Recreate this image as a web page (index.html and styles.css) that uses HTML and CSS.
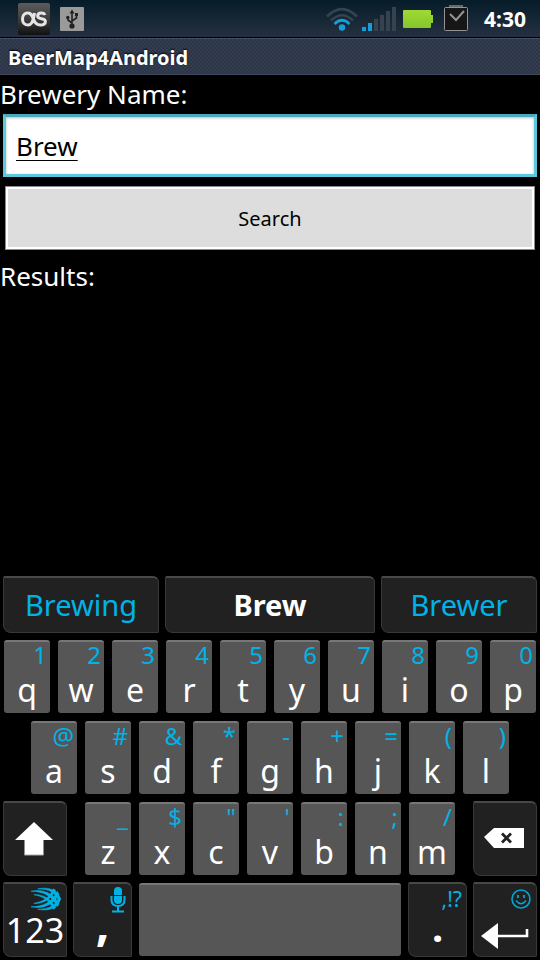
FILE: index.html
```html
<!DOCTYPE html>
<html lang="en">
<head>
<meta charset="utf-8">
<meta name="viewport" content="width=device-width, initial-scale=1">
<title>BeerMap4Android</title>
<link rel="stylesheet" href="styles.css">
</head>
<body>
<header class="status">
  <svg class="app-icon" width="34" height="36" viewBox="0 0 34 36" aria-hidden="true">
    <defs>
      <linearGradient id="tile" x1="0" y1="0" x2="0" y2="1"><stop offset="0" stop-color="#5c5c5c"/><stop offset=".45" stop-color="#414141"/><stop offset=".75" stop-color="#282828"/><stop offset="1" stop-color="#111"/></linearGradient>
    </defs>
    <rect x="1" y="2" width="32" height="32" rx="2" fill="url(#tile)"/>
    <path d="M17.500 12C16 22 14 24 10.800 24C7.300 24 5.500 21.700 5.500 18C5.500 14.300 7.400 12 10.800 12C14.300 12 15.200 14.800 16.500 18.300C18 22.300 19.700 24 23.300 24C26.300 24 28.400 23 28.400 20.500C28.400 16.300 20.700 19 20.700 15C20.700 13 22.200 12 24.400 12C26.200 12 27.400 12.600 28 14" fill="none" stroke="#e6e6e6" stroke-width="3"/>
  </svg>
  <svg class="usb-icon" width="24" height="24" viewBox="0 0 24 24" aria-hidden="true">
    <rect width="24" height="24" rx="1" fill="#9a9a9a"/>
    <path d="M12 5V19M12 16L8 13V10M12 14L16.500 11V8" fill="none" stroke="#222" stroke-width="1.600"/>
    <path d="M12 2.500L14.500 6.500H9.500Z" fill="#222"/>
    <rect x="15" y="6" width="3" height="3" fill="#222"/><circle cx="7.800" cy="10.500" r="1.700" fill="#222"/><circle cx="12" cy="19" r="2.600" fill="#222"/>
  </svg>
  <span class="spacer"></span>
  <svg class="wifi" width="34" height="28" viewBox="0 0 34 28" aria-hidden="true">
    <g fill="none" stroke-width="2.600"><path d="M1 11.500Q16-3.500 31 11.500M5 15.500Q16 5 27 15.500" stroke="#34444f"/><path d="M8.500 19Q16 11.500 23.500 19" stroke="#159fd8"/></g>
    <circle cx="16" cy="22.500" r="3.200" fill="#159fd8"/>
  </svg>
  <svg class="signal" width="36" height="26" viewBox="0 0 36 26" aria-hidden="true">
    <path d="M0 21h4v4h-4zM6 17h4v8h-4z" fill="#159fd8"/>
    <path d="M12 13h4v12h-4zM18 9h4v16h-4zM24 5h4v20h-4zM30 1h4v24h-4z" fill="#36434f"/>
  </svg>
  <svg class="battery" width="30" height="18" viewBox="0 0 30 18" aria-hidden="true">
    <defs><linearGradient id="charge" x1="0" y1="0" x2="0" y2="1"><stop offset="0" stop-color="#a0d934"/><stop offset="1" stop-color="#84c62d"/></linearGradient></defs>
    <path d="M1 0H27Q28 0 28 1V5H30V13H28V17Q28 18 27 18H1Q0 18 0 17V1Q0 0 1 0Z" fill="url(#charge)"/>
  </svg>
  <svg class="task" width="24" height="28" viewBox="0 0 24 28" aria-hidden="true">
    <path d="M5 0H19V2H5Z" fill="#686868"/><rect x=".5" y="2.500" width="23" height="23" rx="1" fill="#161616" stroke="#939393"/>
    <path d="M6 9L12 15L20 6" fill="none" stroke="#949494" stroke-width="2"/>
  </svg>
  <time class="clock">4:30</time>
</header>
<h1 class="title">BeerMap4Android</h1>
<main class="content">
  <form class="search-form">
    <label class="label" for="brewery">Brewery Name:</label>
    <input class="field" id="brewery" type="text" value="Brew" autocomplete="off" spellcheck="false">
    <button class="search" type="button">Search</button>
  </form>
  <h2 class="label">Results:</h2>
</main>
<section class="keyboard" aria-label="Keyboard">
  <div class="suggestions">
    <button class="dark suggestion" type="button">Brewing</button>
    <button class="dark suggestion chosen" type="button">Brew</button>
    <button class="dark suggestion" type="button">Brewer</button>
  </div>
  <div class="row">
    <button class="key" type="button"><sup>1</sup><span>q</span></button>
    <button class="key" type="button"><sup>2</sup><span>w</span></button>
    <button class="key" type="button"><sup>3</sup><span>e</span></button>
    <button class="key" type="button"><sup>4</sup><span>r</span></button>
    <button class="key" type="button"><sup>5</sup><span>t</span></button>
    <button class="key" type="button"><sup>6</sup><span>y</span></button>
    <button class="key" type="button"><sup>7</sup><span>u</span></button>
    <button class="key" type="button"><sup>8</sup><span>i</span></button>
    <button class="key" type="button"><sup>9</sup><span>o</span></button>
    <button class="key" type="button"><sup>0</sup><span>p</span></button>
  </div>
  <div class="row middle">
    <button class="key" type="button"><sup>@</sup><span>a</span></button>
    <button class="key" type="button"><sup>#</sup><span>s</span></button>
    <button class="key" type="button"><sup>&amp;</sup><span>d</span></button>
    <button class="key" type="button"><sup>*</sup><span>f</span></button>
    <button class="key" type="button"><sup>-</sup><span>g</span></button>
    <button class="key" type="button"><sup>+</sup><span>h</span></button>
    <button class="key" type="button"><sup>=</sup><span>j</span></button>
    <button class="key" type="button"><sup>(</sup><span>k</span></button>
    <button class="key" type="button"><sup>)</sup><span>l</span></button>
  </div>
  <div class="row lower">
    <button class="dark" type="button" aria-label="Shift">
      <svg width="40" height="34" viewBox="0 0 40 34"><path d="M19 0L38 18H28.500V33H9.500V18H0Z" fill="#fff"/><path d="M9.500 33H28.500" stroke="#aaa"/></svg>
    </button>
    <div class="letters">
      <button class="key" type="button"><sup>_</sup><span>z</span></button>
      <button class="key" type="button"><sup>$</sup><span>x</span></button>
      <button class="key" type="button"><sup>"</sup><span>c</span></button>
      <button class="key" type="button"><sup>'</sup><span>v</span></button>
      <button class="key" type="button"><sup>:</sup><span>b</span></button>
      <button class="key" type="button"><sup>;</sup><span>n</span></button>
      <button class="key" type="button"><sup>/</sup><span>m</span></button>
    </div>
    <button class="dark" type="button" aria-label="Backspace">
      <svg width="42" height="24" viewBox="0 0 42 24"><path d="M0 10L10 1H40V21H10Z" fill="#fff"/><path d="M18 6.500L27 15.500M27 6.500L18 15.500" stroke="#222" stroke-width="2.800"/></svg>
    </button>
  </div>
  <div class="row bottom">
    <button class="dark stacked" type="button">
      <svg class="corner" width="31" height="26" viewBox="0 0 32 26" aria-hidden="true">
        <g fill="#00b3e6" stroke="#00b3e6" stroke-width=".6">
          <path d="M8 1.500C20-1 29 3 31.500 12L30 15C27 5 19 1.500 8 1.500Z"/>
          <path d="M1 4C14 1 25 7 30 17L28 20C23 9 14 4 1 4Z"/>
          <path d="M4 7.500C14 7 22 12 26.500 21L24 22.500C20 13 13 9 4 7.500Z"/>
          <path d="M8 22.500C20 25 29 21 31.500 12L30 9C27 19 19 22.500 8 22.500Z"/>
          <path d="M1 20C14 23 25 17 30 7L28 4C23 15 14 20 1 20Z"/>
          <path d="M4 16.500C14 17 22 12 26.500 3L24 1.500C20 11 13 15 4 16.500Z"/>
        </g>
      </svg>
      <span class="digits">123</span>
    </button>
    <button class="dark stacked" type="button">
      <svg class="corner" width="16" height="26" viewBox="0 0 16 26" aria-hidden="true"><rect x="4" y="0" width="8" height="17" rx="4" fill="#00b3e6"/><path d="M4 8.500H12" stroke="#222"/><path d="M1.500 9V13Q1.500 19 8 19Q14.500 19 14.500 13V9M8 19V24M2 24.500H14" fill="none" stroke="#00b3e6" stroke-width="2"/></svg>
      <span class="mark comma">,</span>
    </button>
    <button class="key" type="button" aria-label="Space"></button>
    <button class="dark stacked" type="button"><sup>,!?</sup><span class="mark">.</span></button>
    <button class="dark stacked" type="button" aria-label="Enter">
      <svg class="corner" width="20" height="24" viewBox="0 0 20 24"><circle cx="10" cy="12" r="9" fill="none" stroke="#00a5d4" stroke-width="1.600"/><path d="M7 8V11M13 8V11" stroke="#00a5d4" stroke-width="1.800"/><path d="M5 13.500Q10 20 15 13.500" fill="none" stroke="#00a5d4" stroke-width="1.500"/></svg>
      <svg class="enter" width="48" height="26" viewBox="0 0 48 26"><path d="M0 13L17 0V26Z" fill="#fff"/><path d="M16 13H46V6" fill="none" stroke="#fff" stroke-width="2.600"/></svg>
    </button>
  </div>
</section>
</body>
</html>
```
FILE: styles.css
```css
* { box-sizing: border-box; }
body {
  margin: 0;
  min-height: 100vh;
  display: flex;
  flex-direction: column;
  background: #000;
  color: #fff;
  font-family: "Noto Sans", "Open Sans", sans-serif;
}
button, input { font: inherit; margin: 0; min-width: 0; }
svg { display: block; flex: none; }

.status {
  display: flex;
  align-items: center;
  height: 38px;
  padding: 0 14px 0 17px;
  background: linear-gradient(#061c28, #253041);
  border-bottom: 1px solid #000;
}
.usb-icon { margin-left: 9px; }
.spacer { flex: 1; }
.signal { margin-left: 2px; }
.battery { margin-left: 5px; }
.task { margin-left: 11px; }
.clock { margin-left: 16px; font-size: 21px; font-weight: 700; }

.title {
  margin: 0;
  height: 37px;
  padding: 0 8px;
  border-top: 1px solid #46506a;
  border-bottom: 1px solid #3d475c;
  background: repeating-conic-gradient(#2c3446 0 25%, #343e52 0 50%) 0 0 / 4px 4px;
  font-size: 20px;
  line-height: 38px;
  text-shadow: 0 -1px 2px #000;
}

.content { flex: 1; }
.search-form { display: flex; flex-direction: column; }
.label { margin: 0; font-size: 26px; font-weight: 400; line-height: 39px; }
.field {
  height: 63px;
  margin: 0 3px;
  padding: 0 10px;
  border: 3px solid #5bc8de;
  border-top-color: #4aa9bd;
  border-radius: 0;
  outline: 0;
  background: #fff;
  box-shadow: inset 0 1px 3px #bbb;
  color: #000;
  font-size: 26px;
  text-decoration: underline 1px;
  text-underline-offset: 4px;
}
.search {
  height: 64px;
  margin: 9px 5px 7px;
  padding: 0;
  border: 1px solid #8c8c8c;
  border-radius: 0;
  background: #ddd;
  box-shadow: inset 0 0 0 2px #fff;
  color: #000;
  font-size: 20px;
}

.keyboard { display: flex; flex-direction: column; }
.suggestions { display: grid; grid-template-columns: 3fr 4fr 3fr; height: 63px; }
.row { display: grid; grid-template-columns: repeat(10, 1fr); height: 81px; }
.middle { grid-template-columns: repeat(9, 1fr); padding: 0 5%; }
.lower { grid-template-columns: 70fr 400fr 70fr; }
.bottom { grid-template-columns: 70fr 65fr 270fr 65fr 70fr; }
.letters { display: grid; grid-template-columns: repeat(7, 1fr); padding: 0 11px; }

.key {
  display: flex;
  flex-direction: column;
  margin: 4px;
  padding: 0;
  border: 0;
  border-top: 2px solid #777;
  border-radius: 3px;
  background: #565656;
  color: #fff;
  font-size: 32px;
  line-height: 44px;
}
.key span { align-self: center; }
sup { align-self: flex-end; padding-right: 3px; color: #00b3e6; font-size: 24px; line-height: 26px; }
.dark {
  display: flex;
  align-items: center;
  justify-content: center;
  margin: 3px;
  padding: 0;
  border: 1px solid #393939;
  border-top: 2px solid #484848;
  border-radius: 2px 6px 2px 8px;
  background: #212121;
  color: #fff;
}
.suggestion { color: #00b3e6; font-size: 29px; line-height: 40px; }
.chosen { color: #fff; font-weight: 700; }
.stacked { flex-direction: column; justify-content: flex-start; }
.stacked sup { padding-right: 4px; font-size: 21px; line-height: 30px; }
.corner { align-self: flex-end; margin: 3px 5px 0 0; }
.digits { font-size: 34px; line-height: 34px; }
.mark { font-size: 40px; font-weight: 700; line-height: 26px; }
.comma { font-size: 48px; line-height: 20px; }
.enter { margin-top: 12px; }
```
